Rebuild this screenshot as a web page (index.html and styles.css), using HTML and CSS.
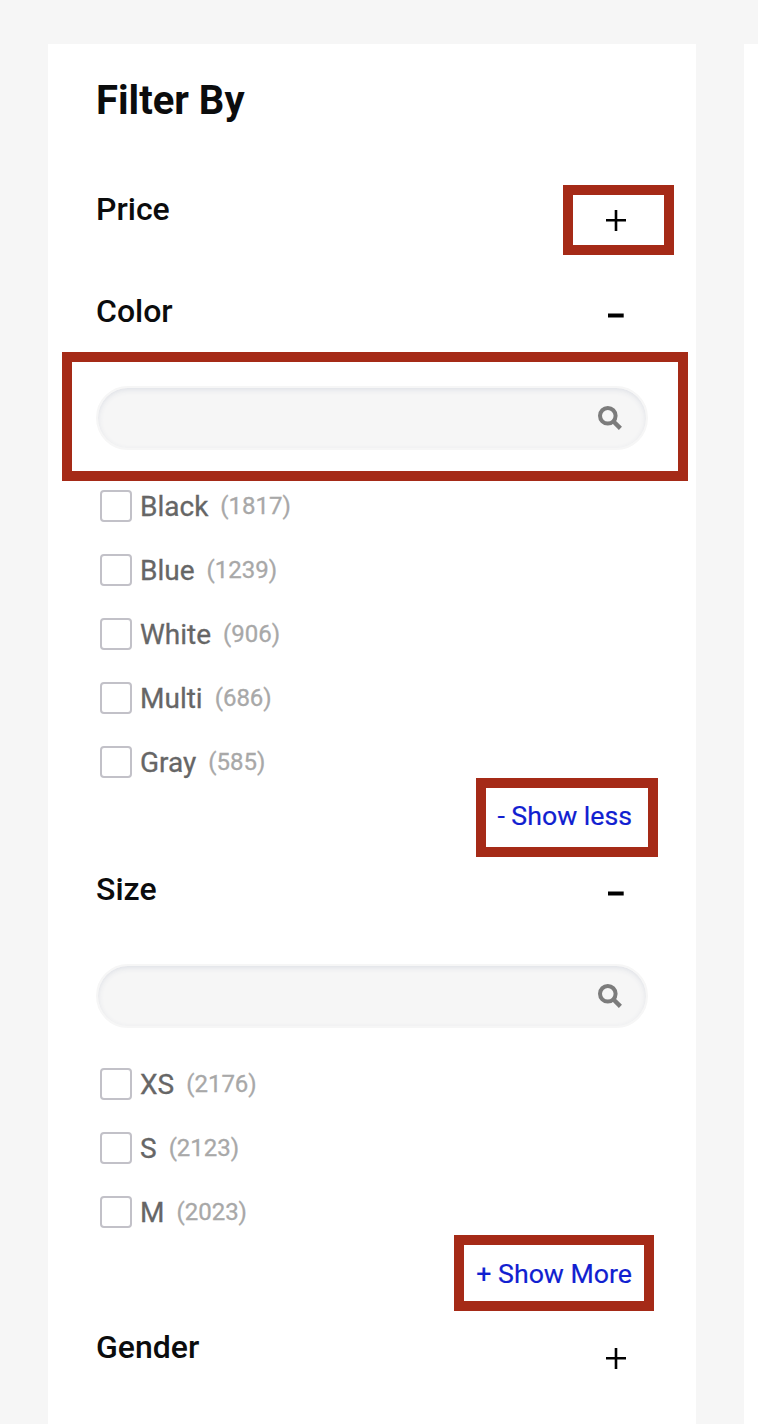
FILE: index.html
```html
<!DOCTYPE html>
<html lang="en">
<head>
<meta charset="utf-8">
<title>Filter By</title>
<link rel="stylesheet" href="styles.css">
</head>
<body>
<div class="page">
  <aside class="panel">
    <h1 class="title">Filter By</h1>
    <section>
      <div class="head"><h2>Price</h2>
        <svg class="sign" viewBox="0 0 20 102"><path d="M0 62.300H20M10 52V73"/></svg>
        <span class="mark mark-toggle"></span>
      </div>
    </section>
    <section>
      <div class="head"><h2>Color</h2>
        <svg class="sign" viewBox="0 0 20 102"><path class="minus" d="M2 55.5H17.700"/></svg>
      </div>
      <div class="search-wrap">
        <div class="search"><svg class="lens" viewBox="0 0 24 24"><circle cx="9.800" cy="9.800" r="7.800"/><path d="M15.500 15.500L22.400 22.400"/></svg></div>
        <span class="mark mark-search"></span>
      </div>
      <ul class="list">
        <li><i class="box"></i><span class="name">Black</span><span class="count">(1817)</span></li>
        <li><i class="box"></i><span class="name">Blue</span><span class="count">(1239)</span></li>
        <li><i class="box"></i><span class="name">White</span><span class="count">(906)</span></li>
        <li><i class="box"></i><span class="name">Multi</span><span class="count">(686)</span></li>
        <li><i class="box"></i><span class="name">Gray</span><span class="count">(585)</span></li>
      </ul>
      <div class="more"><a class="link">- Show less</a><span class="mark mark-less"></span></div>
    </section>
    <section>
      <div class="head"><h2>Size</h2>
        <svg class="sign" viewBox="0 0 20 102"><path class="minus" d="M2 55.5H17.700"/></svg>
      </div>
      <div class="search-wrap">
        <div class="search"><svg class="lens" viewBox="0 0 24 24"><circle cx="9.800" cy="9.800" r="7.800"/><path d="M15.500 15.500L22.400 22.400"/></svg></div>
      </div>
      <ul class="list">
        <li><i class="box"></i><span class="name">XS</span><span class="count">(2176)</span></li>
        <li><i class="box"></i><span class="name">S</span><span class="count">(2123)</span></li>
        <li><i class="box"></i><span class="name">M</span><span class="count">(2023)</span></li>
      </ul>
      <div class="more more-closed"><a class="link">+ Show More</a><span class="mark mark-more"></span></div>
    </section>
    <section>
      <div class="head"><h2>Gender</h2>
        <svg class="sign" viewBox="0 0 20 102"><path d="M0 62.300H20M10 52V73"/></svg>
      </div>
    </section>
  </aside>
  <main class="content"></main>
</div>
</body>
</html>
```
FILE: styles.css
```css
* { box-sizing: border-box; }
body {
  margin: 0;
  background: #f6f6f6;
  font-family: Roboto, "Liberation Sans", sans-serif;
  color: #0b0c0d;
}
.page {
  display: flex;
  gap: 48px;
  height: 1424px;
  padding: 44px 0 0 48px;
  overflow: hidden;
}
.panel {
  flex: 0 0 648px;
  padding: 0 48px;
  background: #fff;
}
.content { flex: 1; background: #fff; }
.title {
  height: 114px;
  margin: 0;
  font-size: 40px;
  font-weight: 700;
  line-height: 114px;
}
.head {
  position: relative;
  display: flex;
  justify-content: space-between;
  height: 102px;
  padding-right: 22px;
}
.head h2 {
  margin: 0;
  font-size: 32px;
  font-weight: 500;
  line-height: 102px;
}
.sign {
  width: 20px;
  height: 102px;
  fill: none;
  stroke: #000;
  stroke-width: 2.6;
}
.sign .minus { stroke-width: 4; }
.search-wrap { position: relative; padding: 25px 0; }
.search {
  display: flex;
  align-items: center;
  justify-content: flex-end;
  height: 64px;
  margin: -1px 0;
  padding-right: 24px;
  border: 2px solid #f6f6f6;
  border-radius: 32px;
  background: #f6f6f6;
  box-shadow: inset 0 2px 6px -1px #d8dbe2;
}
.lens {
  width: 24px;
  height: 24px;
  fill: none;
  stroke: #7c7c7c;
  stroke-width: 4;
}
.lens path { stroke-width: 4.4; }
.list { margin: 0; padding: 0; list-style: none; }
.list li {
  display: flex;
  align-items: center;
  height: 64px;
  padding-left: 4px;
}
.box {
  width: 32px;
  height: 32px;
  margin-right: 8px;
  border: 2px solid #c2c1c8;
  border-radius: 4px;
}
.name { margin-right: 12px; font-size: 28px; color: #666; -webkit-text-stroke: 0.3px #666; }
.count { font-size: 24px; color: #a8a8a8; -webkit-text-stroke: 0.3px #a8a8a8; }
.more {
  position: relative;
  display: flex;
  justify-content: flex-end;
  height: 44px;
  padding-right: 16px;
}
.more-closed { height: 52px; padding-top: 8px; }
.link { font-size: 26.7px; line-height: 44px; color: #1020d0; -webkit-text-stroke: 0.2px #1020d0; }
.mark { position: absolute; border: 10px solid #a52a17; }
.mark-toggle { top: 27px; right: -26px; width: 111px; height: 70px; }
.mark-search { top: -10px; left: -34px; width: 626px; height: 129px; }
.mark-less { top: -16px; right: -10px; width: 182px; height: 79px; }
.mark-more { top: -9px; right: -6px; width: 200px; height: 76px; }
```
